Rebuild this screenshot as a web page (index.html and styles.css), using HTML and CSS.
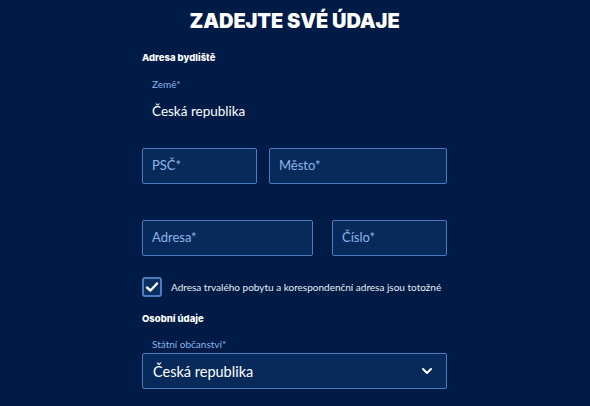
FILE: index.html
```html
<!DOCTYPE html>
<html lang="cs">
<head>
<meta charset="utf-8">
<link rel="stylesheet" href="styles.css">
</head>
<body>
<main class="form">
  <h1 class="title">ZADEJTE SVÉ ÚDAJE</h1>
  <h2 class="section">Adresa bydliště</h2>
  <div class="static-field">
    <div class="static-label">Země*</div>
    <div class="static-value">Česká republika</div>
  </div>
  <div class="row row-1">
    <div class="input psc">PSČ*</div>
    <div class="input mesto">Město*</div>
  </div>
  <div class="row row-2">
    <div class="input adresa">Adresa*</div>
    <div class="input cislo">Číslo*</div>
  </div>
  <label class="check">
    <span class="box"><svg width="14" height="12" viewBox="0 0 14 12"><path d="M2 6.5 L5.5 9.5 L12 2.5" fill="none" stroke="#fff" stroke-width="2.4" stroke-linecap="round" stroke-linejoin="round"/></svg></span>
    <span class="check-text">Adresa trvalého pobytu a korespondenční adresa jsou totožné</span>
  </label>
  <h2 class="section section-2">Osobní údaje</h2>
  <div class="select-label">Státní občanství*</div>
  <div class="select">
    <span>Česká republika</span>
    <svg width="12" height="8" viewBox="0 0 12 8"><path d="M2 2 L6 6 L10 2" fill="none" stroke="#fff" stroke-width="2" stroke-linecap="round" stroke-linejoin="round"/></svg>
  </div>
</main>
</body>
</html>
```
FILE: styles.css
```css
html, body {
  margin: 0;
  padding: 0;
  background: #001b46;
  color: #fff;
  font-family: Lato, "Open Sans", sans-serif;
}
.form {
  width: 305px;
  margin-left: calc(50% - 153px);
  display: flex;
  flex-direction: column;
}
.title {
  margin: 9px 0 0;
  text-align: center;
  font-family: Inter, "DejaVu Sans", sans-serif;
  font-weight: 900;
  font-size: 20px;
  line-height: 24px;
  letter-spacing: -0.1px;
}
.section {
  margin: 18px 0 0;
  font-family: Inter, sans-serif;
  font-weight: 800;
  font-size: 9.5px;
  line-height: 14px;
}
.static-field {
  padding-left: 10px;
  margin-top: 13px;
}
.static-label {
  font-size: 10px;
  line-height: 12px;
  color: #8cb4ea;
}
.static-value {
  margin-top: 13px;
  font-size: 13.5px;
  line-height: 16px;
}
.row {
  display: flex;
  justify-content: space-between;
}
.row-1 { margin-top: 29px; }
.row-2 { margin-top: 36px; }
.input {
  box-sizing: border-box;
  height: 36px;
  border: 1px solid #4c7cc0;
  border-radius: 2px;
  background: #082a5b;
  color: #8cb4ea;
  font-size: 13px;
  display: flex;
  align-items: center;
  padding-left: 9px;
  padding-bottom: 2px;
}
.psc { width: 115px; }
.mesto { width: 178px; }
.adresa { width: 171px; }
.cislo { width: 115px; }
.check {
  display: flex;
  align-items: center;
  margin-top: 21px;
  gap: 9px;
}
.box {
  box-sizing: border-box;
  width: 20px;
  height: 20px;
  border: 2px solid #4c7cc0;
  border-radius: 3px;
  background: #0b2f63;
  display: flex;
  align-items: center;
  justify-content: center;
}
.check-text {
  font-size: 10px;
  line-height: 12px;
  color: #e8eef8;
  white-space: nowrap;
}
.section-2 { margin-top: 15px; }
.select-label {
  margin-top: 12px;
  padding-left: 10px;
  font-size: 10px;
  line-height: 12px;
  color: #8cb4ea;
}
.select {
  box-sizing: border-box;
  margin-top: 3px;
  height: 36px;
  border: 1px solid #4c7cc0;
  border-radius: 2px;
  background: #082a5b;
  display: flex;
  align-items: center;
  justify-content: space-between;
  padding: 0 13px 0 10px;
  font-size: 14.5px;
}
```
